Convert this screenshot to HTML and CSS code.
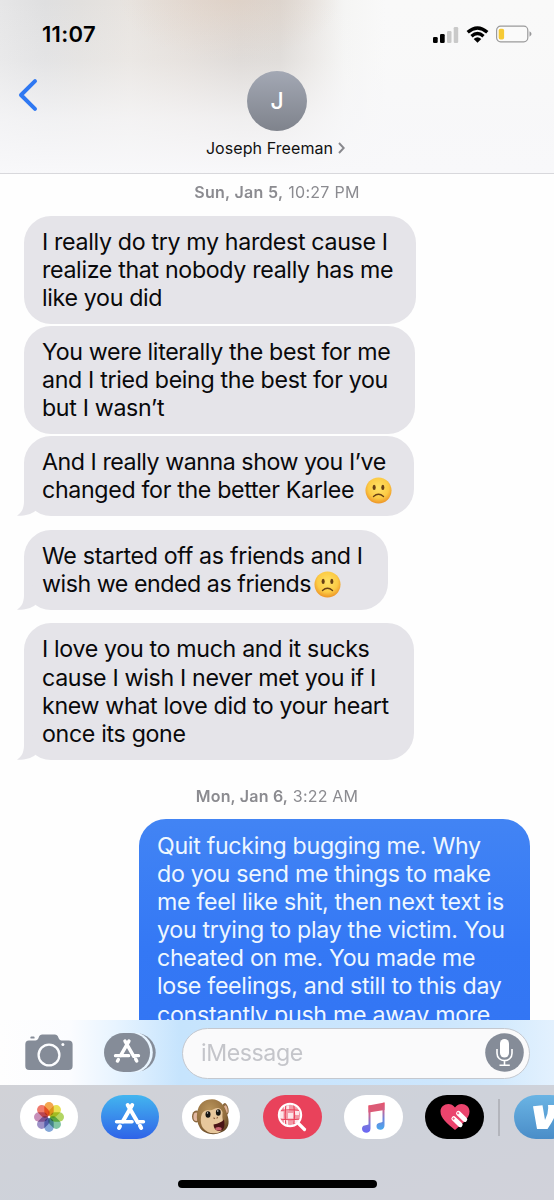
FILE: index.html
```html
<!DOCTYPE html>
<html lang="en">
<head>
<meta charset="utf-8">
<title>Messages</title>
<link rel="stylesheet" href="styles.css">
</head>
<body>
<svg class="defs" width="0" height="0" aria-hidden="true">
  <defs>
    <radialGradient id="face" cx=".5" cy=".4" r=".6"><stop offset="0" stop-color="#ffe267"/><stop offset=".65" stop-color="#fccb45"/><stop offset="1" stop-color="#ed9426"/></radialGradient>
    <linearGradient id="note" x1="0" y1="0" x2="0" y2="1"><stop offset="0" stop-color="#ee5165"/><stop offset=".35" stop-color="#c66594"/><stop offset=".65" stop-color="#7b78d8"/><stop offset="1" stop-color="#6a66f5"/></linearGradient>
    <linearGradient id="note2" x1="0" y1="0" x2="0" y2="1"><stop offset="0" stop-color="#ee5165"/><stop offset=".3" stop-color="#c66594"/><stop offset=".6" stop-color="#6f83dc"/><stop offset="1" stop-color="#48a9ee"/></linearGradient>
    <radialGradient id="fur" cx=".4" cy=".3" r=".75"><stop offset="0" stop-color="#b8935a"/><stop offset=".7" stop-color="#916c3c"/><stop offset="1" stop-color="#5e4325"/></radialGradient>
    <symbol id="frown" viewBox="0 0 28 28">
      <circle cx="14" cy="14" r="13.5" fill="url(#face)"/>
      <ellipse cx="9.5" cy="10.8" rx="1.6" ry="2.7" fill="#694014"/><ellipse cx="18.5" cy="10.8" rx="1.6" ry="2.7" fill="#694014"/>
      <path d="M8.800 20.200Q14 15.600 19.200 20.200" fill="none" stroke="#694014" stroke-width="1.400" stroke-linecap="round"/>
    </symbol>
    <symbol id="tail" viewBox="0 0 24 30"><path d="M7 0V15C7 22.500 4.500 27 0 29.700C7 30.200 14 28.200 18 25.200L24 10Z" fill="#e5e4e9"/></symbol>
    <symbol id="store" viewBox="0 0 32 30">
      <g fill="none" stroke-linecap="round" stroke-width="4"><path d="M13.700 3 23.800 20.500M18.200 3 8.800 19.500M26 23.800 27.200 26M6 24.300 5 26"/><path d="M2.600 19.800H18M25 19.800H29.400" stroke-width="3.600"/></g>
    </symbol>
  </defs>
</svg>
<main class="phone">
  <header class="header">
    <div class="status">
      <span class="clock">11:07</span>
      <span class="indicators">
        <svg width="26" height="17" viewBox="0 0 26 17"><rect x="0" y="11" width="4.700" height="6" rx="1.300"/><rect x="7" y="8" width="4.700" height="9" rx="1.300"/><rect x="14" y="5" width="4.500" height="12" rx="1.300" fill="#c9c9c9"/><rect x="20.700" y="1" width="4.500" height="16" rx="1.300" fill="#c9c9c9"/></svg>
        <svg width="23" height="17" viewBox="0 0 23 17"><path d="M1.700 6.200Q11.500-2.200 21.300 6.200M5.500 10.200Q11.500 5 17.500 10.200" fill="none" stroke="#000" stroke-width="3.400"/><path d="M7.700 12.900Q11.500 9.700 15.300 12.900L11.500 16.800Z"/></svg>
        <svg width="37" height="18" viewBox="0 0 37 18"><rect x=".6" y="1.200" width="31.200" height="15.600" rx="4" fill="#fafafa" stroke="#9a9a9b" stroke-width="1.200"/><rect x="2.700" y="3.800" width="5.400" height="10.600" rx="1.700" fill="#f6ca35"/><path d="M33.500 6.300Q37.600 9 33.500 11.700Z" fill="#98989a"/></svg>
      </span>
    </div>
    <svg class="back" width="20" height="34" viewBox="0 0 20 34"><path d="M17 3.200 3 17 17 30.800" fill="none" stroke="#2f78f2" stroke-width="4" stroke-linecap="round" stroke-linejoin="round"/></svg>
    <div class="contact">
      <div class="avatar">J</div>
      <div class="name">Joseph Freeman<svg width="7" height="12" viewBox="0 0 7 12"><path d="M1 1 5.700 6 1 11" fill="none" stroke="#87878c" stroke-width="1.900"/></svg></div>
    </div>
  </header>

  <section class="thread">
    <p class="stamp"><b>Sun, Jan 5,</b> 10:27 PM</p>
    <div class="bubble w1">I really do try my hardest cause I<br>realize that nobody really has me<br>like you did</div>
    <div class="bubble w2">You were literally the best for me<br>and I tried being the best for you<br>but I wasn’t</div>
    <div class="bubble w3 last"><span class="tight">And I really wanna show you I’ve</span><br>changed for the better Karlee <svg class="emoji spaced"><use href="#frown"/></svg><svg class="tail"><use href="#tail"/></svg></div>
    <div class="bubble w4 last">We started off as friends and I<br><span class="tight">wish we ended as friends</span><svg class="emoji"><use href="#frown"/></svg><svg class="tail"><use href="#tail"/></svg></div>
    <div class="bubble w5 last">I love you to much and it sucks<br>cause I wish I never met you if I<br>knew what love did to your heart<br>once its gone<svg class="tail"><use href="#tail"/></svg></div>
    <p class="stamp second"><b>Mon, Jan 6,</b> 3:22 AM</p>
    <div class="bubble sent">Quit fucking bugging me. Why<br>do you send me things to make<br>me feel like shit, then next text is<br>you trying to play the victim. You<br>cheated on me. You made me<br>lose feelings, and still to this day<br>constantly push me away more</div>
  </section>

  <section class="compose">
    <svg class="camera" width="48" height="37" viewBox="0 0 48 37"><path d="M5.500 3.200Q5.500 2.500 6.300 2.500H8.700Q9.500 2.500 9.500 3.200V4.600H5.500Z" fill="#858c98"/><path d="M4 6.500H10.500Q12.300 6.500 13.300 4.500L14.300 2Q15.200.4 17 .4H30Q31.800.4 32.700 2L33.800 4.500Q34.700 6.500 36.500 6.500H43.500Q47.600 6.500 47.600 10.500V32Q47.600 36 43.600 36H4.200Q.3 36 .3 32V10.500Q.3 6.500 4 6.500Z" fill="#858c98"/><circle cx="24" cy="21" r="10.400" fill="none" stroke="#fcfdff" stroke-width="2.300"/><circle cx="37.900" cy="10.500" r="1.500" fill="#fcfdff"/></svg>
    <svg class="apps" width="52" height="39" viewBox="0 0 52 39"><rect x="7" y=".3" width="44.700" height="38.400" rx="19.200" fill="#858c98"/><rect x="-1.600" y="-1.400" width="50.400" height="41.800" rx="20.900" fill="#e9f5ff"/><rect x="0" y="0" width="46" height="39" rx="19.500" fill="#858c98"/><use href="#store" x="9" y="5.500" width="28" height="26" stroke="#fff"/></svg>
    <div class="field"><span>iMessage</span>
      <svg width="39" height="39" viewBox="0 0 39 39"><circle cx="19.500" cy="19.500" r="19.300" fill="#858c98"/><rect x="15" y="6" width="9" height="18.600" rx="4.500" fill="#fff"/><path d="M12 16V20.300C12 30 27 30 27 20.300V16M19.500 27.500V32M14.500 32.300H24.800" fill="none" stroke="#fff" stroke-width="1.600"/></svg>
    </div>
  </section>

  <footer class="drawer">
    <nav class="strip">
      <span class="app"><svg width="32" height="32" viewBox="-16 -16 32 32"><g class="petals"><rect x="-4.700" y="-15" width="9.400" height="14" rx="4.700" fill="#f39a36"/><rect x="-4.700" y="-15" width="9.400" height="14" rx="4.700" fill="#e6dc3a" transform="rotate(45)"/><rect x="-4.700" y="-15" width="9.400" height="14" rx="4.700" fill="#a7cf4d" transform="rotate(90)"/><rect x="-4.700" y="-15" width="9.400" height="14" rx="4.700" fill="#70bd98" transform="rotate(135)"/><rect x="-4.700" y="-15" width="9.400" height="14" rx="4.700" fill="#739bd3" transform="rotate(180)"/><rect x="-4.700" y="-15" width="9.400" height="14" rx="4.700" fill="#9082c0" transform="rotate(225)"/><rect x="-4.700" y="-15" width="9.400" height="14" rx="4.700" fill="#bf80b0" transform="rotate(270)"/><rect x="-4.700" y="-15" width="9.400" height="14" rx="4.700" fill="#ed6759" transform="rotate(315)"/></g></svg></span>
      <span class="app blue"><svg width="32" height="30" stroke="#fff"><use href="#store"/></svg></span>
      <span class="app"><svg width="40" height="38" viewBox="0 0 40 38"><ellipse cx="5.300" cy="18.500" rx="4.300" ry="6" fill="#8b6840"/><ellipse cx="5.200" cy="18.700" rx="2.800" ry="4.300" fill="#e2b8a1"/><ellipse cx="34.500" cy="11" rx="3" ry="6" fill="#8b6840" transform="rotate(-12 34.500 11)"/><ellipse cx="34.900" cy="11.300" rx="1.600" ry="4" fill="#dfb296" transform="rotate(-12 34.900 11.300)"/><path d="M6 16C7 5 14 1.300 21 1.300C29 1.300 34 8 36 16C38.500 23 38.500 29 33 33C25 38 14 37 9 30C6 25 5.500 20 6 16Z" fill="url(#fur)"/><path d="M10 19Q11 12.500 16.500 12Q20 13 23 11Q29 8 31.500 14Q31 19 32 24Q33.500 31 28 34.500Q18 37.500 12 30Q9 25.500 10 19Z" fill="#e7c79c"/><ellipse cx="17" cy="16.500" rx="2.500" ry="3.300" fill="#141311"/><ellipse cx="27.300" cy="14.500" rx="2.400" ry="3.200" fill="#141311"/><circle cx="16.500" cy="14.900" r=".7" fill="#fff"/><circle cx="26.800" cy="13" r=".7" fill="#fff"/><path d="M22.500 19.700 24 20.700M26.700 19 25.700 20.500" stroke="#8a5b3d" stroke-width="1.100"/><path d="M22.500 26.500Q30 25 33 21.500Q35.200 33 27.500 33Q22.800 32 22.500 26.500Z" fill="#4a1417"/><ellipse cx="27.500" cy="30.700" rx="3.200" ry="1.700" fill="#c96571"/></svg></span>
      <span class="app red"><svg width="30" height="30" viewBox="0 0 30 30"><circle cx="13" cy="13" r="11.300" fill="#f29aa6"/><path d="M7 3.500H12V8.500H7ZM17 8.500H22V13H17ZM2.500 9.500H6.500V17H2.500ZM11 11H16V16.500H11ZM17 17.500H22V21H17ZM7 17.500H11V23H7Z" fill="#fff" opacity=".75"/><path d="M8.800 3Q7.500 13 8.800 23M16.800 3Q18.500 13 16.800 23M2.500 8.500Q13 7 23.500 8.500M2.500 17Q13 18.500 23.500 17" fill="none" stroke="#e9425b" stroke-width="1.100"/><circle cx="13" cy="13" r="11.200" fill="none" stroke="#fff" stroke-width="2"/><path d="M21.500 21.500 27.500 27.500" stroke="#fff" stroke-width="3.200" stroke-linecap="round"/></svg></span>
      <span class="app"><svg width="25" height="31" viewBox="0 0 25 31"><path d="M7.500 3.500 23.500.5V8L7.500 10.500Z" fill="#dc5b76"/><path d="M9.500 3.500V26.500C9.500 32.500 1 31.500 1 27C1 22.500 5.500 23.500 7.500 22.500V3.500Z" fill="url(#note)"/><path d="M23.500 .5V23C23.500 29.500 15.500 28.800 15.500 24.500C15.500 20 20 21 21.500 19.700V1Z" fill="url(#note2)"/></svg></span>
      <span class="app black"><svg width="30" height="28" viewBox="0 0 30 28"><path d="M15 27C7 20 .5 15.500.5 8.500C.5 1 10.500-1.800 15 4.500C19.500-1.800 29.500 1 29.500 8.500C29.500 15.500 23 20 15 27Z" fill="#ea446d"/><g stroke="#fff" stroke-linecap="round" stroke-width="4.800"><path d="M18.400 10.300 24.800 16.500M13.800 15.600 20.200 21.800"/></g><path d="M17.400 9.500 18.800 10.900M12.900 15 14.300 16.400" stroke="#ed6988" stroke-width="2"/></svg></span>
      <i class="rule"></i>
      <span class="app venmo"><svg width="35" height="25" viewBox="0 0 35 25"><path d="M0 1.300 9.500.3 12 15Q16 7.500 15 0L24 0Q25 9 14.500 24H4Z" fill="#fff"/></svg></span>
    </nav>
    <div class="home"></div>
  </footer>
</main>
</body>
</html>
```
FILE: styles.css
```css
* { box-sizing: border-box; }
body { margin: 0; background: #fff; font-family: Inter, "Liberation Sans", sans-serif; color: #09090b; }
.defs { position: absolute; }
svg { display: block; flex: none; }

.phone { width: 554px; height: 1200px; display: flex; flex-direction: column; overflow: hidden; background: #fefefe; }

.header {
  position: relative; flex: none; height: 174px; border-bottom: 1.500px solid #d8d8dc;
  background:
    linear-gradient(to bottom, rgba(247,247,249,0) 0, rgba(247,247,249,.2) 35%, rgba(247,247,249,.75) 68%, #f8f8fa 100%),
    radial-gradient(ellipse 110px 60px at 230px 0, rgba(226,208,194,.6), rgba(226,208,194,0)),
    linear-gradient(to right, #e6e6e7 0, #dfdfe0 45px, #e2e0de 80px, #e8e4e0 130px, #e3ddd8 185px, #dad5d1 240px, #dbd7d3 280px, #e9e6e3 312px, #f5f5f4 345px, #f9f9f9 385px);
}
.status { display: flex; justify-content: space-between; align-items: center; padding: 21px 21px 0 42px; height: 47px; }
.clock { font-size: 22px; font-weight: 600; letter-spacing: .3px; color: #000; }
.indicators { display: flex; align-items: center; gap: 7px; }
.back { position: absolute; left: 18px; top: 78px; }
.contact { display: flex; flex-direction: column; align-items: center; padding-top: 24px; }
.avatar { width: 60px; height: 60px; border-radius: 50%; background: linear-gradient(#a3a8b4, #7f838c); color: #fff; font-size: 23px; font-weight: 500; line-height: 61px; text-align: center; }
.name { display: flex; align-items: center; gap: 5px; margin-top: 7px; margin-left: -3px; line-height: 20px; font-size: 16px; letter-spacing: .08px; color: #111; }

.thread { flex: none; height: 846px; overflow: hidden; display: flex; flex-direction: column; align-items: flex-start; padding: 0 24px; }
.stamp { flex: none; margin: 0; align-self: center; height: 41.500px; line-height: 36px; font-size: 16px; letter-spacing: .3px; color: #8b8b90; white-space: nowrap; }
.stamp b { font-weight: 600; }
.second { margin-top: 18px; letter-spacing: .2px; }
.bubble { position: relative; flex: none; padding: 12px 18px; border-radius: 27px; background: #e5e4e9; font-size: 23.200px; line-height: 28.100px; letter-spacing: -.33px; white-space: nowrap; margin-bottom: 2px; }
.w1 { width: 392px; }
.w2 { width: 391px; }
.w3 { width: 390px; }
.w4 { width: 364px; }
.w5 { width: 390px; }
.last { margin-bottom: 13.500px; }
.w5 { margin-bottom: 0; }
.tight { letter-spacing: -.46px; }
.emoji { display: inline-block; width: 27px; height: 27px; margin: -5px 3px -1px; vertical-align: -5px; }
.spaced { margin-left: 5px; }
.tail { position: absolute; left: -7px; bottom: 0; width: 24px; height: 30px; }
.sent { align-self: flex-end; width: 391px; height: 250px; padding-top: 12.700px; letter-spacing: -.3px; color: #eef7ff; background: linear-gradient(#4284f4, #3478f5 130px, #3274f3); }

.compose { flex: none; height: 65px; display: flex; align-items: center; padding-left: 25px; background: linear-gradient(to right, #fefefe 0, #fbfcff 70px, #e8f4ff 115px, #c6e4fd 180px, #cce6fd 440px, #d3eafd 500px, #e3f1fe 554px); }
.camera { margin-right: 31px; }
.apps { margin-right: 26px; }
.field { width: 348px; height: 51px; margin-top: 1px; border: 1.500px solid #c4c8cf; border-radius: 26px; background: #fafafb; display: flex; align-items: center; justify-content: space-between; padding: 0 5.500px 0 18px; font-size: 23.200px; letter-spacing: -.45px; color: #c4c5ca; }
.field svg { margin-top: -1px; }

.drawer { flex: none; height: 115px; background: linear-gradient(165deg, #d1d2d7, #ced2da 50%, #d1d2da); display: flex; flex-direction: column; align-items: center; justify-content: space-between; padding: 10px 0 12px; overflow: hidden; }
.strip { width: 554px; display: flex; align-items: center; gap: 22.700px; padding-left: 19.500px; }
.app { flex: none; width: 58.500px; height: 44px; border-radius: 22px; background: #fff; display: flex; align-items: center; justify-content: center; overflow: hidden; }
.petals { isolation: isolate; }
.petals rect { mix-blend-mode: multiply; opacity: .88; }
.blue { background: linear-gradient(#43b5ef, #2f63e8); }
.red { background: #e9425b; }
.black { background: #000; }
.rule { flex: none; width: 1.500px; height: 37px; margin: 0 -8.500px; background: #b3b5bc; }
.venmo { background: linear-gradient(#6ab4e4, #4a8dc8); justify-content: flex-start; padding-left: 19px; }
.home { width: 199px; height: 8px; border-radius: 4px; background: #000; }
```
